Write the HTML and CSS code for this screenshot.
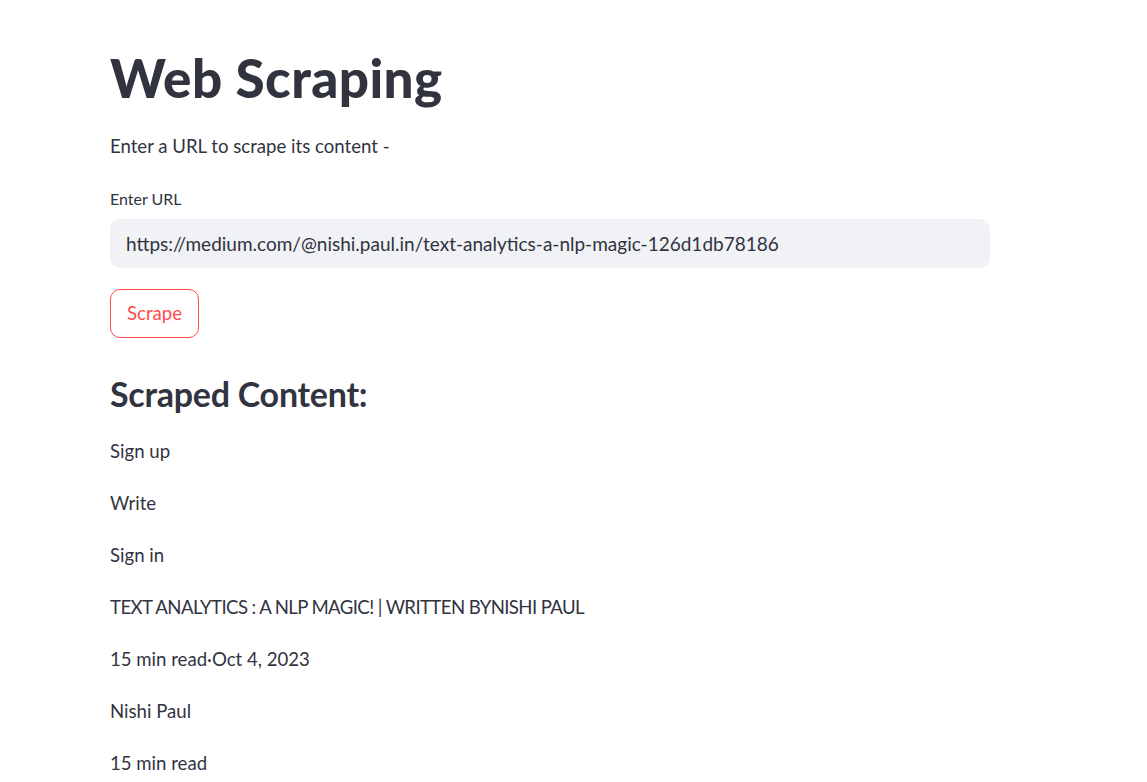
FILE: index.html
```html
<!DOCTYPE html>
<html lang="en">
<head>
<meta charset="utf-8">
<title>Web Scraping</title>
<link rel="stylesheet" href="styles.css">
</head>
<body>
<main class="main">
  <h1 class="title">Web Scraping</h1>
  <p class="intro">Enter a URL to scrape its content -</p>
  <label class="field-label" for="url">Enter URL</label>
  <input class="url-input" id="url" type="text" value="https://medium.com/@nishi.paul.in/text-analytics-a-nlp-magic-126d1db78186">
  <button class="scrape-btn" type="button">Scrape</button>
  <h3 class="subheader">Scraped Content:</h3>
  <div class="content">
    <p class="para">Sign up</p>
    <p class="para">Write</p>
    <p class="para">Sign in</p>
    <p class="para caps">TEXT ANALYTICS : A NLP MAGIC! | WRITTEN BYNISHI PAUL</p>
    <p class="para">15 min read·Oct 4, 2023</p>
    <p class="para">Nishi Paul</p>
    <p class="para">15 min read</p>
  </div>
</main>
</body>
</html>
```

FILE: styles.css
```css
html, body {
  margin: 0;
  padding: 0;
  background: #ffffff;
}
body {
  font-family: "Lato", "Liberation Sans", sans-serif;
  color: #31333f;
  overflow: hidden;
}
.main {
  width: 880px;
  padding: 45px 0 0 110px;
  display: flex;
  flex-direction: column;
  align-items: flex-start;
}
.title {
  margin: 0;
  font-size: 53px;
  font-weight: 900;
  line-height: 66px;
  letter-spacing: 0.4px;
}
.intro {
  margin: 19px 0 0;
  font-size: 18.6px;
  line-height: 32px;
}
.field-label {
  margin-top: 26px;
  font-size: 16px;
  line-height: 22px;
}
.url-input {
  margin-top: 9px;
  box-sizing: border-box;
  width: 880px;
  height: 49px;
  padding: 0 16px;
  border: none;
  border-radius: 10px;
  background: #f0f2f6;
  font-family: inherit;
  font-size: 19px;
  color: #31333f;
  outline: none;
}
.scrape-btn {
  margin-top: 21px;
  box-sizing: border-box;
  height: 49px;
  padding: 0 16px;
  border: 1px solid #ff4b4b;
  border-radius: 10px;
  background: #ffffff;
  color: #ff4b4b;
  font-family: inherit;
  font-size: 18.6px;
  line-height: 47px;
}
.subheader {
  margin: 34px 0 0;
  font-size: 34px;
  font-weight: 700;
  line-height: 44px;
  letter-spacing: -0.25px;
}
.content {
  margin-top: 19px;
}
.para {
  margin: 0 0 20px;
  font-size: 18.6px;
  line-height: 32px;
}
.caps {
  letter-spacing: -0.6px;
}
```
